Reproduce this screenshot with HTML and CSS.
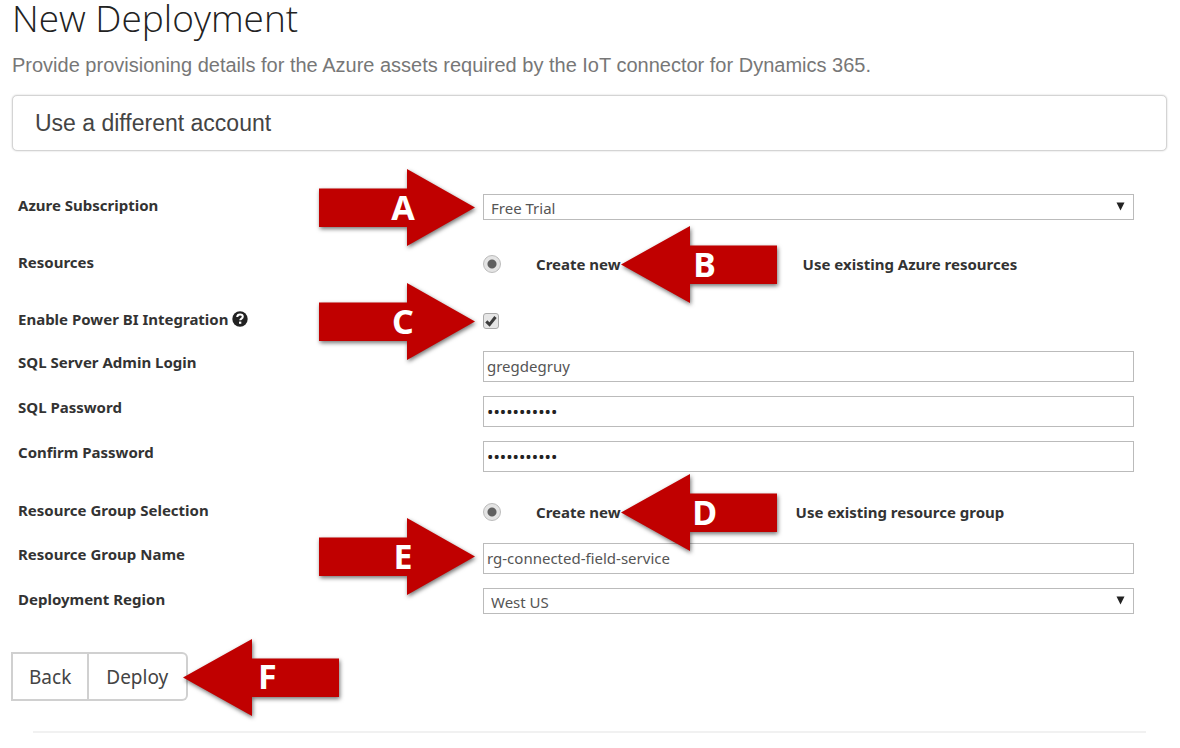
FILE: index.html
```html
<!DOCTYPE html>
<html lang="en">
<head>
<meta charset="utf-8">
<meta name="viewport" content="width=device-width, initial-scale=1">
<title>New Deployment</title>
<link rel="stylesheet" href="styles.css">
</head>
<body>
<svg class="defs" aria-hidden="true">
  <symbol id="arrow-right" viewBox="0 0 156 77"><path d="M0 19.5H88V0L156 38.5L88 77V58H0Z"/></symbol>
  <symbol id="arrow-left" viewBox="0 0 156 77"><path d="M156 19.5H69V0L0 38.5L69 77V58H156Z"/></symbol>
</svg>
<main class="page">
  <h1 class="title">New Deployment</h1>
  <p class="intro">Provide provisioning details for the Azure assets required by the IoT connector for Dynamics 365.</p>
  <button type="button" class="account">Use a different account</button>

  <form class="form">
    <div class="row">
      <label class="label" for="subscription">Azure Subscription</label>
      <div class="control">
        <div class="select">
          <select id="subscription" class="field field-select"><option>Free Trial</option></select>
          <svg class="caret" viewBox="0 0 9 9" aria-hidden="true"><path d="M0.500 0.500H8.500L4.500 8.500Z"/></svg>
        </div>
        <div class="callout callout-before"><svg class="callout-shape"><use href="#arrow-right"/></svg><span class="callout-letter">A</span></div>
      </div>
    </div>

    <div class="row row-spaced">
      <span class="label" id="resources-label">Resources</span>
      <div class="control choices" role="radiogroup" aria-labelledby="resources-label">
        <div class="choice">
          <input type="radio" class="radio" name="resources" id="resources-new" checked>
          <label class="choice-label" for="resources-new">Create new</label>
          <div class="callout callout-after"><svg class="callout-shape"><use href="#arrow-left"/></svg><span class="callout-letter">B</span></div>
        </div>
        <div class="choice">
          <input type="radio" class="radio" name="resources" id="resources-existing">
          <label class="choice-label" for="resources-existing">Use existing Azure resources</label>
        </div>
      </div>
    </div>

    <div class="row row-spaced row-check">
      <label class="label" for="powerbi">Enable Power BI Integration
        <svg class="help" viewBox="0 0 16 16" aria-hidden="true"><circle cx="8" cy="8" r="7.7"/><path class="help-mark" d="M5.2 6C5.3 4.2 6.4 3.5 8 3.5C9.700 3.500 10.800 4.400 10.800 5.800C10.800 7.700 8.300 7.500 8.200 9.300"/><rect class="help-dot" x="7" y="10.600" width="2.300" height="2.200"/></svg>
      </label>
      <div class="control choices">
        <span class="check">
          <input type="checkbox" class="checkbox" id="powerbi" checked>
          <svg class="tick" viewBox="0 0 16 16" aria-hidden="true"><path d="M3.300 8.400L6.500 11.600L12.500 4"/></svg>
        </span>
        <div class="callout callout-before"><svg class="callout-shape"><use href="#arrow-right"/></svg><span class="callout-letter">C</span></div>
      </div>
    </div>

    <div class="row">
      <label class="label" for="login">SQL Server Admin Login</label>
      <div class="control"><input type="text" class="field" id="login" value="gregdegruy"></div>
    </div>
    <div class="row">
      <label class="label" for="password">SQL Password</label>
      <div class="control"><input type="password" class="field field-secret" id="password" value="abcdefghijk"></div>
    </div>
    <div class="row">
      <label class="label" for="confirm">Confirm Password</label>
      <div class="control"><input type="password" class="field field-secret" id="confirm" value="abcdefghijk"></div>
    </div>

    <div class="row row-spaced">
      <span class="label" id="group-label">Resource Group Selection</span>
      <div class="control choices choices-narrow" role="radiogroup" aria-labelledby="group-label">
        <div class="choice">
          <input type="radio" class="radio" name="group" id="group-new" checked>
          <label class="choice-label" for="group-new">Create new</label>
          <div class="callout callout-after"><svg class="callout-shape"><use href="#arrow-left"/></svg><span class="callout-letter">D</span></div>
        </div>
        <div class="choice">
          <input type="radio" class="radio" name="group" id="group-existing">
          <label class="choice-label" for="group-existing">Use existing resource group</label>
        </div>
      </div>
    </div>

    <div class="row">
      <label class="label" for="group-name">Resource Group Name</label>
      <div class="control">
        <input type="text" class="field" id="group-name" value="rg-connected-field-service">
        <div class="callout callout-before"><svg class="callout-shape"><use href="#arrow-right"/></svg><span class="callout-letter">E</span></div>
      </div>
    </div>
    <div class="row">
      <label class="label" for="region">Deployment Region</label>
      <div class="control">
        <div class="select">
          <select id="region" class="field field-select"><option>West US</option></select>
          <svg class="caret" viewBox="0 0 9 9" aria-hidden="true"><path d="M0.500 0.500H8.500L4.500 8.500Z"/></svg>
        </div>
      </div>
    </div>
  </form>

  <div class="actions">
    <button type="button" class="action">Back</button>
    <button type="button" class="action action-last">Deploy</button>
    <div class="callout callout-actions"><svg class="callout-shape"><use href="#arrow-left"/></svg><span class="callout-letter">F</span></div>
  </div>
  <hr class="rule">
</main>
</body>
</html>
```

FILE: styles.css
```css
* { box-sizing: border-box; }

body {
  margin: 0;
  background: #fff;
  color: #333;
  font-family: "Noto Sans", "Open Sans", sans-serif;
  font-size: 15px;
}

.defs { position: absolute; width: 0; height: 0; }

.page { padding: 0 13px 14px 12px; }

.title {
  margin: 0;
  color: #222;
  font-family: "Open Sans", "Noto Sans", sans-serif;
  font-size: 37px;
  font-weight: 300;
  line-height: 36px;
}

.intro {
  margin: 16px 0;
  color: #777;
  font-family: "Liberation Sans", Arial, sans-serif;
  font-size: 20px;
  line-height: 27px;
}

.account {
  display: block;
  width: 100%;
  padding: 14px 22px;
  border: 1px solid #d4d4d4;
  border-radius: 5px;
  background: #fff;
  box-shadow: 0 0 2px rgba(0, 0, 0, 0.2);
  color: #444;
  font-family: "Liberation Sans", Arial, sans-serif;
  font-size: 23px;
  line-height: 26px;
  text-align: left;
}

.form {
  display: flex;
  flex-direction: column;
  gap: 14px;
  margin-top: 43px;
  padding: 0 33px 0 6px;
}

.row {
  display: grid;
  grid-template-columns: 5fr 7fr;
  min-height: 30px;
}
.row-spaced { margin-top: 13px; }
.row-check { min-height: 29px; }

.label {
  display: flex;
  align-items: center;
  align-self: start;
  gap: 4px;
  font-weight: 700;
  line-height: 22px;
}

.help { width: 16px; height: 16px; fill: #222; }
.help-mark { fill: none; stroke: #fff; stroke-width: 2; }
.help-dot { fill: #fff; }

.control { position: relative; align-self: start; }

.field {
  display: block;
  width: 100%;
  height: 31px;
  padding: 1px 3px 2px;
  border: 1px solid #bbb;
  border-radius: 0;
  background: #fff;
  color: #555;
  font: inherit;
}
.field-secret { color: #222; font-size: 17px; }
.field-select {
  height: 26px;
  padding: 2px 7px 0;
  appearance: none;
}

.select { position: relative; }
.caret {
  position: absolute;
  top: 8px;
  right: 9px;
  width: 9px;
  height: 9px;
  fill: #222;
  pointer-events: none;
}

.choices {
  display: flex;
  align-items: center;
  gap: 129px;
  min-height: 26px;
}
.choices-narrow { gap: 122px; }

.choice {
  position: relative;
  display: flex;
  align-items: center;
  gap: 35px;
}
.choice-label { font-weight: 700; line-height: 22px; }

.radio {
  width: 18px;
  height: 18px;
  margin: 0;
  border: 1px solid #bbb;
  border-radius: 50%;
  background: #e4e4e4;
  appearance: none;
}
.radio:checked { background: radial-gradient(circle, #606060 4px, #e4e4e4 5px); }

.check { position: relative; width: 16px; height: 16px; }
.checkbox {
  display: block;
  width: 16px;
  height: 16px;
  margin: 0;
  border: 1px solid #aaa;
  border-radius: 3px;
  background: #e6e6e6;
  appearance: none;
}
.tick {
  position: absolute;
  inset: 0;
  fill: none;
  stroke: #3c3c3c;
  stroke-width: 3;
  pointer-events: none;
}

.actions {
  position: relative;
  display: inline-flex;
  margin: 34px 0 0 -1px;
}
.action {
  padding: 11px 16px 9px;
  border: 2px solid #d0d0d0;
  background: #fff;
  color: #444;
  font-family: inherit;
  font-size: 19px;
  line-height: 25px;
}
.action-last {
  padding-right: 18px;
  padding-left: 17px;
  border-left: 0;
  border-radius: 0 6px 6px 0;
}

.rule {
  height: 2px;
  margin: 30px 21px 0;
  border: 0;
  background: #f1f1f1;
}

/* Lettered arrows laid over the form */
.callout {
  position: absolute;
  top: 50%;
  z-index: 1;
  display: flex;
  align-items: center;
  justify-content: center;
  width: 156px;
  height: 77px;
  margin-top: -38px;
  padding: 0 0 2px 12px;
  pointer-events: none;
}
.callout-before {
  top: -25px;
  right: 100%;
  margin: 0 8px 0 0;
}
.callout-after { left: 100%; }
.callout-actions { left: 100%; margin-left: -5px; }

.callout-shape {
  position: absolute;
  inset: 0;
  width: 100%;
  height: 100%;
  overflow: visible;
  fill: #c00000;
  filter: drop-shadow(1px 2px 2px rgba(0, 0, 0, 0.55));
}
.callout-letter {
  position: relative;
  color: #fff;
  font-size: 34px;
  font-weight: 700;
  line-height: 40px;
}
```
